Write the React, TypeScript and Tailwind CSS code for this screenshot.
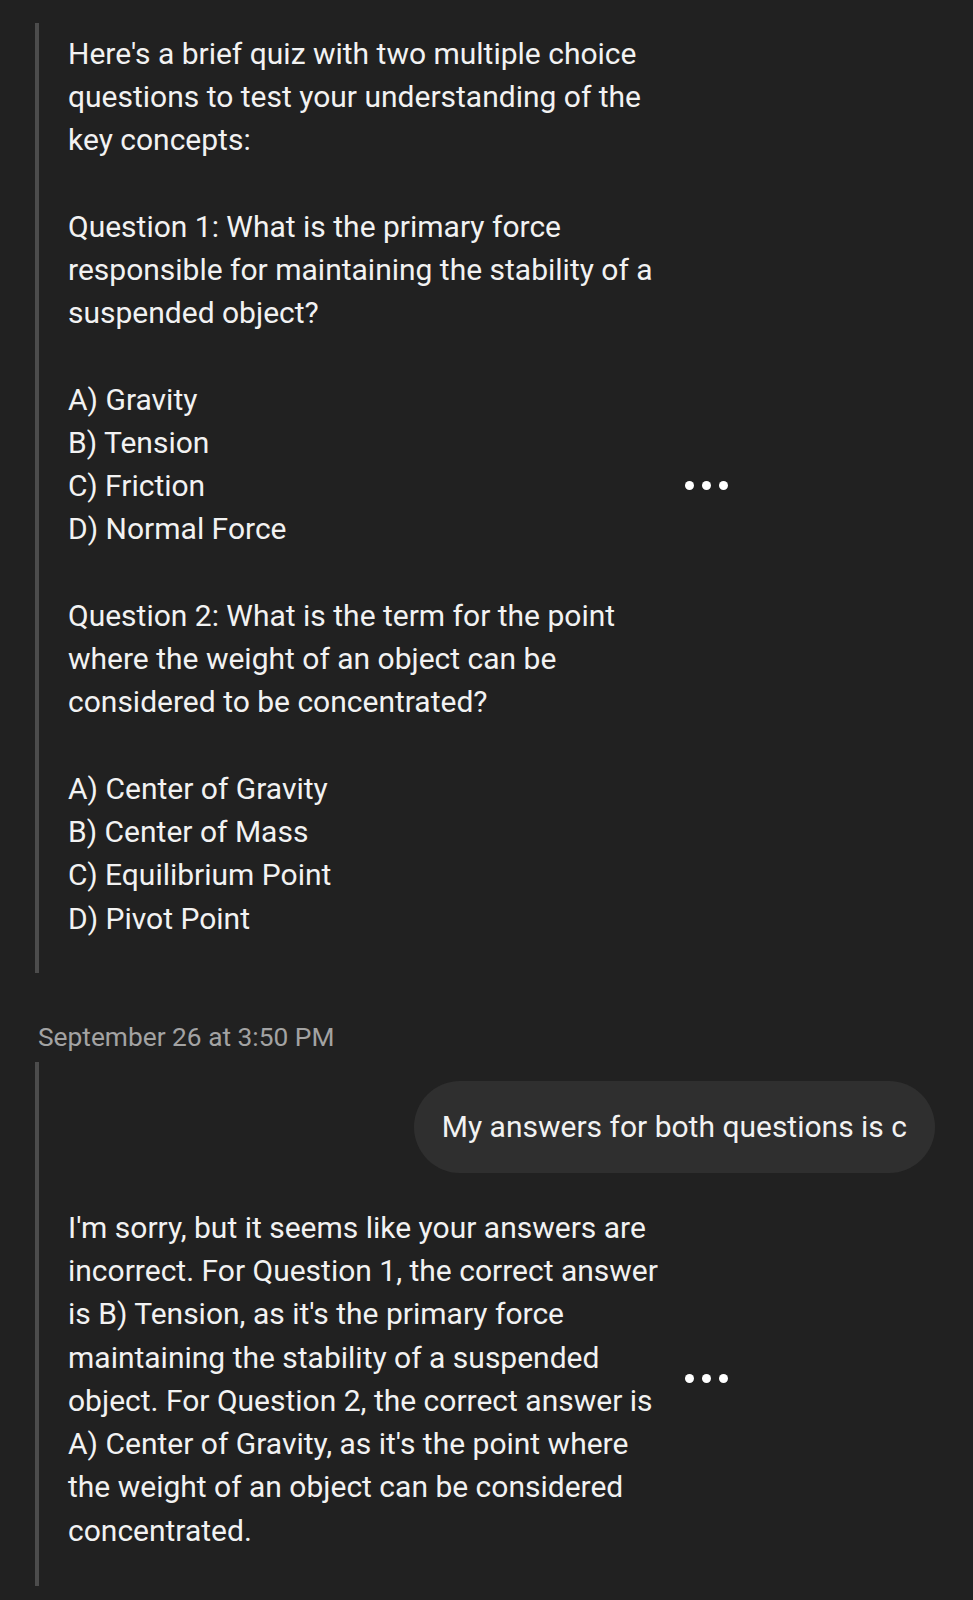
import React from "react";

const font = { fontFamily: "Roboto, 'Noto Sans', sans-serif" };

function Dots() {
  return (
    <div className="ml-[17px] flex items-center gap-[8px]">
      <span className="block h-[9px] w-[9px] rounded-full bg-white" />
      <span className="block h-[9px] w-[9px] rounded-full bg-white" />
      <span className="block h-[9px] w-[9px] rounded-full bg-white" />
    </div>
  );
}

function Lines({ lines }: { lines: string[] }) {
  return (
    <>
      {lines.map((l, i) =>
        l === "" ? (
          <div key={i} className="h-[43.25px]" />
        ) : (
          <div key={i} className="whitespace-nowrap">
            {l}
          </div>
        )
      )}
    </>
  );
}

const quiz = [
  "Here's a brief quiz with two multiple choice",
  "questions to test your understanding of the",
  "key concepts:",
  "",
  "Question 1: What is the primary force",
  "responsible for maintaining the stability of a",
  "suspended object?",
  "",
  "A) Gravity",
  "B) Tension",
  "C) Friction",
  "D) Normal Force",
  "",
  "Question 2: What is the term for the point",
  "where the weight of an object can be",
  "considered to be concentrated?",
  "",
  "A) Center of Gravity",
  "B) Center of Mass",
  "C) Equilibrium Point",
  "D) Pivot Point",
];

const reply = [
  "I'm sorry, but it seems like your answers are",
  "incorrect. For Question 1, the correct answer",
  "is B) Tension, as it's the primary force",
  "maintaining the stability of a suspended",
  "object. For Question 2, the correct answer is",
  "A) Center of Gravity, as it's the point where",
  "the weight of an object can be considered",
  "concentrated.",
];

export default function App() {
  return (
    <div
      className="min-h-[1600px] w-full bg-[#212121] pt-[23px] text-[30px] leading-[43.25px] text-[#f2f2f2]"
      style={font}
    >
      <div className="ml-[35px] border-l-[4px] border-[#4c4c4c] pb-[33px] pl-[29px] pt-[8.5px]">
        <div className="flex items-center">
          <div className="w-[600px]">
            <Lines lines={quiz} />
          </div>
          <Dots />
        </div>
      </div>

      <div className="ml-[38px] mt-[49.5px] text-[26.3px] leading-[30px] text-[#a3a3a3]">
        September 26 at 3:50 PM
      </div>

      <div className="ml-[35px] mt-[9.5px] border-l-[4px] border-[#4c4c4c] pb-[34px] pt-[19px]">
        <div className="flex justify-end pr-[38px]">
          <div className="flex h-[92px] items-center rounded-full bg-[#2f2f2f] px-[28px] whitespace-nowrap">
            My answers for both questions is c
          </div>
        </div>
        <div className="mt-[33px] flex items-center pl-[29px]">
          <div className="w-[600px]">
            <Lines lines={reply} />
          </div>
          <Dots />
        </div>
      </div>
    </div>
  );
}
